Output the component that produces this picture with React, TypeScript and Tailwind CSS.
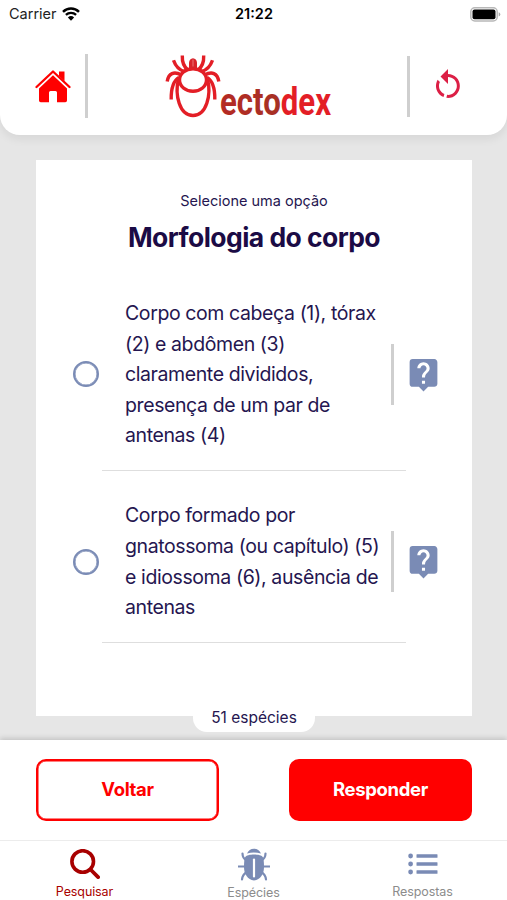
import { useState } from "react";
import type { ReactNode } from "react";
import { MdLiveHelp } from "react-icons/md";

interface Option {
  id: number;
  lines: string[];
}

const options: Option[] = [
  {
    id: 1,
    lines: [
      "Corpo com cabeça (1), tórax",
      "(2) e abdômen (3)",
      "claramente divididos,",
      "presença de um par de",
      "antenas (4)",
    ],
  },
  {
    id: 2,
    lines: [
      "Corpo formado por",
      "gnatossoma (ou capítulo) (5)",
      "e idiossoma (6), ausência de",
      "antenas",
    ],
  },
];

const WifiIcon = () => (
  <svg width="18" height="14" viewBox="0 0 18 14" fill="none">
    <path d="M1 4.8a11.6 11.6 0 0 1 16 0" stroke="#000" strokeWidth="2.5" />
    <path d="M3.9 7.9a7.4 7.4 0 0 1 10.2 0" stroke="#000" strokeWidth="2.3" />
    <path d="M9 13.8 5.9 10.5a4.6 4.6 0 0 1 6.2 0z" fill="#000" />
  </svg>
);

const BatteryIcon = () => (
  <svg width="31" height="15" viewBox="0 0 31 15">
    <rect
      x="0.8"
      y="0.8"
      width="26.4"
      height="13.2"
      rx="4"
      fill="#fff"
      stroke="#b8b8b8"
      strokeWidth="1.5"
    />
    <rect x="2.5" y="2.5" width="23" height="9.8" rx="2" fill="#000" />
    <path d="M28.7 5.2q1.6.6 1.6 2.2t-1.6 2.2z" fill="#aaa" />
  </svg>
);

const HomeIcon = () => (
  <svg width="36" height="34" viewBox="0 0 36 34" fill="#ff0000">
    <path d="M24 2.5h5.5V12L24 7z" />
    <path
      d="M1.5 18 18 2.5 34.5 18"
      fill="none"
      stroke="#ff0000"
      strokeWidth="2.3"
      strokeLinecap="round"
      strokeLinejoin="round"
    />
    <path d="M18 6.3 32 19.5V31.5q0 1.7-1.7 1.7H22V23.5q0-1.5-1.5-1.5h-5q-1.5 0-1.5 1.5v9.7H5.7Q4 33.2 4 31.5v-12z" />
  </svg>
);

const RestartIcon = () => (
  <svg width="36" height="36" viewBox="0 0 24 24" fill="#dc1f45">
    <path d="M12,4C14.1,4 16.1,4.8 17.6,6.3C20.7,9.4 20.7,14.5 17.6,17.6C15.8,19.5 13.3,20.2 10.9,19.9L11.4,17.9C13.1,18.1 14.9,17.5 16.2,16.2C18.5,13.9 18.5,10.1 16.2,7.7C15.1,6.6 13.5,6 12,6V10.6L7,5.6L12,0.6V4M6.3,17.6C3.7,15 3.3,11 5.1,7.9L6.6,9.4C5.5,11.6 5.9,14.4 7.8,16.2C8.3,16.7 8.9,17.1 9.6,17.4L9,19.4C8,19 7.1,18.4 6.3,17.6Z" />
  </svg>
);

const TickLogo = () => (
  <svg width="56" height="64" viewBox="0 0 56 64" fill="none" className="shrink-0">
    <g stroke="#e31e26" strokeWidth="3.4">
      <path d="M13.5 25C9.5 41 14.5 61.500 28 61.500S46.500 41 42.500 25" />
      <ellipse cx="28" cy="26" rx="13.5" ry="11.3" />
      <path d="M17.3 1.5c-.3 7 1.700 11.500 5.700 14.500M38.700 1.500c.3 7-1.700 11.500-5.700 14.500" />
      <path d="M8.5 6.2c2.2 6.300 5.500 9.800 11 11.300M47.500 6.200c-2.200 6.300-5.500 9.800-11 11.300" />
      <path d="M2.2 27.5c1.3-8.500 7-10.500 14.300-6.500M53.800 27.500c-1.300-8.500-7-10.500-14.300-6.500" />
      <path d="M6.2 45.5C6 34 8 27 14 23.500M49.800 45.500C50 34 48 27 42 23.500" />
    </g>
    <path d="M24 14V8.5Q24.5 4.7 28 4.2q3.5.5 4 4.3V14z" fill="#d8232a" />
    <path d="M28 5.5v7" stroke="#f18a8d" strokeWidth=".8" />
  </svg>
);

const Logo = () => (
  <div className="flex h-16 w-[166px] items-end">
    <TickLogo />
    <svg width="112" height="40" viewBox="0 0 112 40" className="-ml-1 shrink-0 overflow-visible">
      <defs>
        <linearGradient id="wordmark" x1="0" x2="1" y1="0" y2="0">
          <stop offset="0" stopColor="#b52a24" />
          <stop offset="0.54" stopColor="#a63125" />
          <stop offset="0.56" stopColor="#e31e26" />
          <stop offset="1" stopColor="#e31e26" />
        </linearGradient>
      </defs>
      <text
        x="3"
        y="37"
        fill="url(#wordmark)"
        fontSize="39"
        fontWeight="700"
        textLength="111"
        lengthAdjust="spacingAndGlyphs"
        className="font-['Roboto']"
      >
        ectodex
      </text>
    </svg>
  </div>
);

const SearchIcon = () => (
  <svg width="30" height="30" viewBox="0 0 30 30" fill="none" stroke="#a80000">
    <circle cx="12.7" cy="12.5" r="10.8" strokeWidth="3.6" />
    <path d="m20.5 20.5 7.6 7.6" strokeWidth="3.8" strokeLinecap="round" />
  </svg>
);

const BugIcon = () => (
  <svg width="32" height="33" viewBox="0 0 32 33" fill="none">
    <path
      d="M4.5 5.5c0 3.5 1 5.500 4.500 7M27.500 5.500c0 3.500-1 5.500-4.500 7M.5 18.500H8M31.500 18.500H24M4 31.500c.3-3.500 1.500-5.500 5-7.500M28 31.500c-.3-3.500-1.500-5.500-5-7.500"
      stroke="#7a8bb5"
      strokeWidth="2.2"
      strokeLinecap="round"
    />
    <path d="M9 5.500C10.500 2.200 12.500.7 16 .7s5.500 1.500 7 4.800q-7-1.800-14 0z" fill="#7a8bb5" />
    <path
      d="M16 6.500c4 0 8 .8 9 3 .7 2 1 5 1 9.500 0 7-3.500 12.500-10 13.500C9.500 31.500 6 26 6 19c0-4.500.3-7.500 1-9.500 1-2.200 5-3 9-3z"
      fill="#7a8bb5"
    />
    <path d="M16 11.500v17" stroke="#fff" strokeWidth="2.2" strokeLinecap="round" />
  </svg>
);

const ListIcon = () => (
  <svg width="30" height="22" viewBox="0 0 30 22" fill="#7a8bb5">
    <circle cx="2.6" cy="3" r="2.4" />
    <circle cx="2.6" cy="11" r="2.4" />
    <circle cx="2.6" cy="19" r="2.4" />
    <rect x="8.5" y="1.3" width="21" height="3.4" rx=".5" />
    <rect x="8.5" y="9.3" width="21" height="3.4" rx=".5" />
    <rect x="8.5" y="17.3" width="21" height="3.4" rx=".5" />
  </svg>
);

const StatusBar = () => (
  <div className="grid h-7 grid-cols-3 items-center pr-[6px] pl-[9px] text-[14.5px] text-[#222]">
    <div className="flex items-center gap-[5px]">
      <span>Carrier</span>
      <WifiIcon />
    </div>
    <span className="-ml-0.5 text-center font-semibold text-black">21:22</span>
    <div className="flex justify-end">
      <BatteryIcon />
    </div>
  </div>
);

const Header = () => (
  <header className="relative z-10 h-[135px] rounded-b-[20px] bg-white shadow-[0_4px_10px_rgba(0,0,0,0.07)]">
    <StatusBar />
    <div className="flex h-[116px] items-center justify-between">
      <div className="flex w-[88px] items-center justify-between pl-[35px]">
        <button type="button" aria-label="Início">
          <HomeIcon />
        </button>
        <span className="h-16 w-[3px] bg-[#cfcfcf]" />
      </div>
      <Logo />
      <div className="flex w-[100px] items-center gap-5">
        <span className="h-[61px] w-[3px] bg-[#cfcfcf]" />
        <button type="button" aria-label="Reiniciar">
          <RestartIcon />
        </button>
      </div>
    </div>
  </header>
);

interface OptionRowProps {
  option: Option;
  selected: boolean;
  onSelect: () => void;
}

const OptionRow = ({ option, selected, onSelect }: OptionRowProps) => (
  <li>
    <div className="flex items-center pl-[37px]">
      <button
        type="button"
        role="radio"
        aria-checked={selected}
        onClick={onSelect}
        className="flex size-[26px] shrink-0 items-center justify-center rounded-full border-2 border-[#7a8bb5] shadow-[inset_0_0_0_0.5px_#7a8bb5]"
      >
        {selected && <span className="size-3 rounded-full bg-[#7a8bb5]" />}
      </button>
      <p className="ml-[26px] w-[266px] shrink-0 text-[19.5px] leading-[30.6px] tracking-[-0.4px] text-[#251650]">
        {option.lines.map((line) => (
          <span key={line} className="block whitespace-nowrap">
            {line}
          </span>
        ))}
      </p>
      <span className="h-[61px] w-[3px] shrink-0 bg-[#cfcfcf]" />
      <button type="button" aria-label="Ajuda" className="ml-[11px] shrink-0">
        <MdLiveHelp className="size-[37px] text-[#7a8bb5]" />
      </button>
    </div>
    <hr className="mt-[19px] ml-[66px] w-[304px] border-[#dedede]" />
  </li>
);

interface TabProps {
  label: string;
  icon: ReactNode;
  active?: boolean;
}

const Tab = ({ label, icon, active }: TabProps) => (
  <button type="button" className="flex flex-1 flex-col items-center">
    <span className="flex h-[34px] items-center">{icon}</span>
    <span
      className={
        active
          ? "mt-1 text-[12.5px] leading-4 tracking-[-0.1px] text-[#a80000]"
          : "mt-1 text-[12.5px] leading-4 tracking-[-0.1px] text-[#8c8c8c]"
      }
    >
      {label}
    </span>
  </button>
);

export default function App() {
  const [selected, setSelected] = useState<number | null>(null);

  return (
    <div className="flex h-[900px] w-[507px] flex-col overflow-hidden bg-[#e6e6e6] font-['Inter','Liberation_Sans',sans-serif]">
      <Header />

      <main className="relative mx-9 mt-[25px] h-[556px] w-[436px] bg-white pt-[31px]">
        <p className="text-center text-[14.5px] leading-5 text-[#251650]">
          Selecione uma opção
        </p>
        <h1 className="mt-[9px] text-center text-[26.5px] leading-[34px] font-bold tracking-[-0.55px] text-[#1b0b45]">
          Morfologia do corpo
        </h1>
        <ul className="mt-[44px] flex flex-col gap-[29.5px]" role="radiogroup">
          {options.map((option) => (
            <OptionRow
              key={option.id}
              option={option}
              selected={selected === option.id}
              onSelect={() => setSelected(option.id)}
            />
          ))}
        </ul>
        {/* Species counter */}
        <div className="absolute -bottom-4 left-[157px] flex h-[31px] w-[122px] items-center justify-center rounded-[14px] bg-white pt-0.5 text-[15.5px] text-[#251650]">
          51 espécies
        </div>
      </main>

      <footer className="relative mt-auto h-[160px] bg-white shadow-[0_-2px_5px_rgba(0,0,0,0.15)]">
        <div className="flex h-[100px] justify-between pt-[19px] pr-[35px] pl-9 text-[18.5px] font-bold tracking-[-0.35px]">
          <button
            type="button"
            className="h-[62px] w-[183px] rounded-[10px] border-2 border-[#ff0000] text-[#ff0000] shadow-[inset_0_0_0_0.5px_#ff0000]"
          >
            Voltar
          </button>
          <button
            type="button"
            className="h-[62px] w-[183px] rounded-[10px] bg-[#ff0000] text-white"
          >
            Responder
          </button>
        </div>
        <nav className="flex h-[60px] border-t border-[#ececec] pt-[7px]">
          <Tab label="Pesquisar" icon={<SearchIcon />} active />
          <Tab label="Espécies" icon={<BugIcon />} />
          <Tab label="Respostas" icon={<ListIcon />} />
        </nav>
      </footer>
    </div>
  );
}
